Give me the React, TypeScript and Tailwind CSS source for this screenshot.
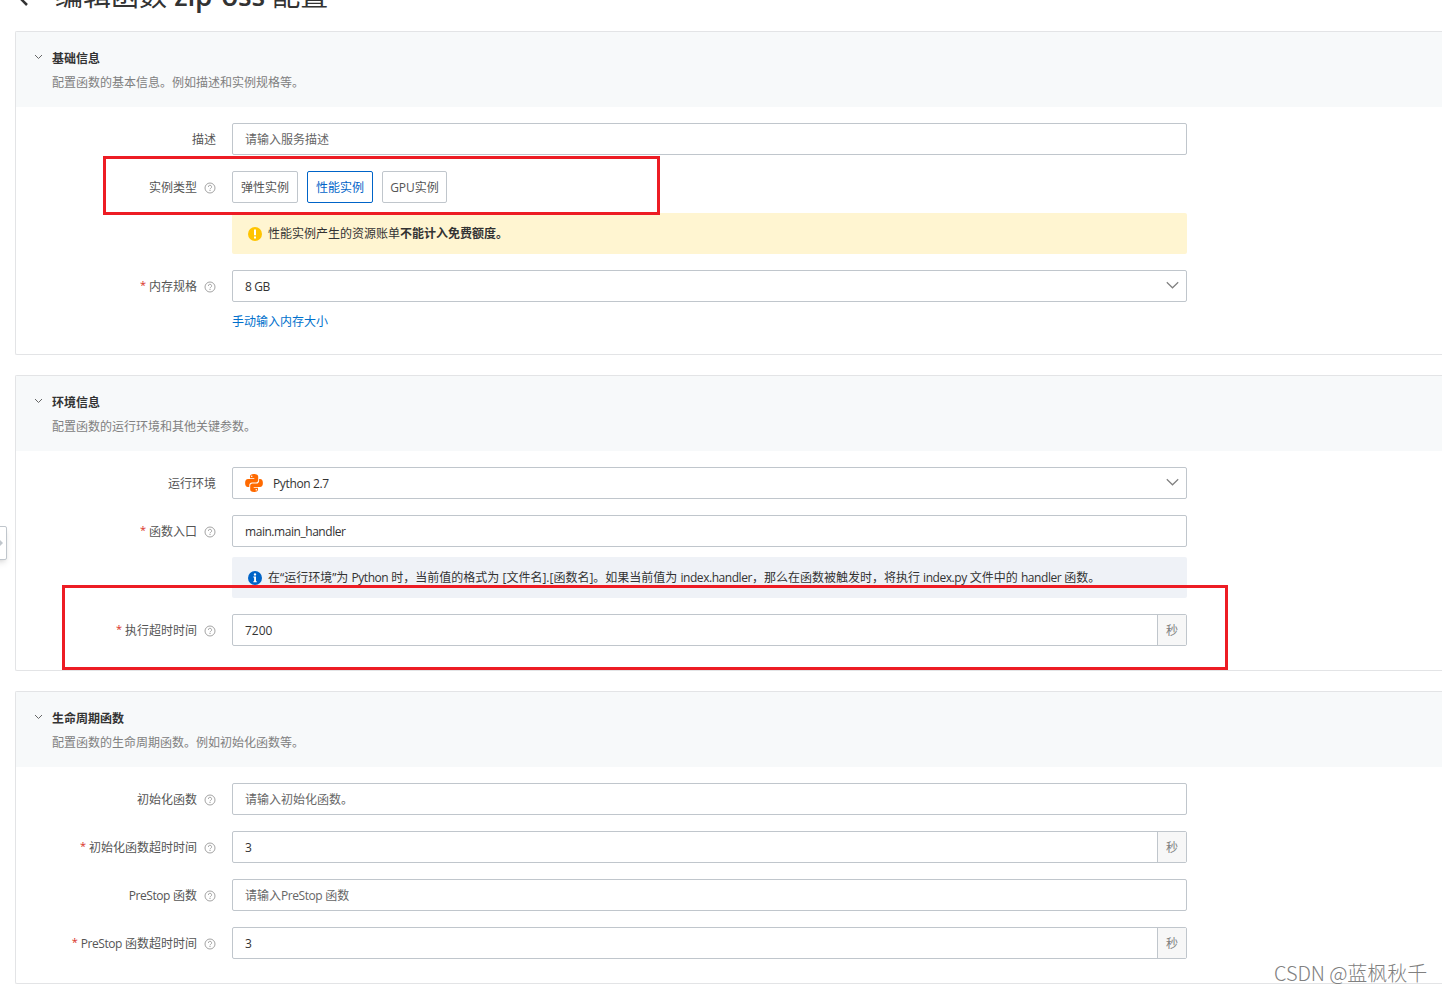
import type { ReactNode } from 'react';
import clsx from 'clsx';

// latin runs sit a little tighter than the chinese text around them
function mixed(text: string) {
  return text.split(/([A-Za-z][A-Za-z0-9_.]*)/).map((part, i) =>
    i % 2 ? (
      <span key={i} className="tracking-[-0.45px]">
        {part}
      </span>
    ) : (
      part
    )
  );
}

function HelpIcon() {
  return (
    <svg viewBox="0 0 12 12" className="ml-[7px] h-3 w-3 shrink-0" fill="none" stroke="#999999">
      <circle cx="6" cy="6" r="5" strokeWidth="0.9" />
      <path d="M4.4 4.9a1.6 1.6 0 1 1 2.3 1.4c-.5.3-.7.5-.7 1" strokeWidth="0.9" />
      <path d="M6 8v1" strokeWidth="1" />
    </svg>
  );
}

function ArrowDown() {
  return (
    <svg viewBox="0 0 14 8" className="mb-0.5 h-2 w-3.5 shrink-0" fill="none" stroke="#808080" strokeWidth="1.2">
      <path d="M1.8 1.300 7.500 6.800 13.200 1.300" />
    </svg>
  );
}

function WarningIcon() {
  return (
    <svg viewBox="0 0 14 14" className="h-3.5 w-3.5 shrink-0">
      <circle cx="7" cy="7" r="7" fill="#ffc400" />
      <path d="M6 2.600h2V8.200H6z" fill="#fff" />
      <path d="M6 9.400h2v2H6z" fill="#fff" />
    </svg>
  );
}

function InfoIcon() {
  return (
    <svg viewBox="0 0 14 14" className="h-3.5 w-3.5 shrink-0">
      <circle cx="7" cy="7" r="7" fill="#0064c8" />
      <circle cx="7" cy="3.400" r="1.200" fill="#fff" />
      <path d="M5.300 5.500h2.700v4.700h.8v1H5.300v-1h.8V6.500h-.8z" fill="#fff" />
    </svg>
  );
}

function PythonIcon() {
  return (
    <svg viewBox="0 0 18 18" className="h-[18px] w-[18px] shrink-0" fill="#ff6a00">
      <path d="M8.900 0C6 0 5 .9 5 2.500V4.300h4.300v.7H3.100C1.200 5 .1 6.400.1 9s1.100 4 2.700 4h1.500v-1.900c0-1.500 1.200-2.600 2.700-2.600h4.100c1.200 0 2.100-1 2.100-2.200V2.500C13.200.9 11.800 0 8.900 0zM6.700 1.400a.8.8 0 1 1 0 1.600.8.800 0 0 1 0-1.600z" />
      <path d="M9.100 18c2.900 0 3.900-.9 3.900-2.500v-1.800H8.700V13h6.200c1.900 0 3-1.400 3-4s-1.100-4-2.700-4h-1.100v1.900c0 1.500-1.200 2.600-2.700 2.600H7.300c-1.200 0-2.100 1-2.100 2.200v3.800c0 1.600 1 2.500 3.900 2.500zm2.200-1.400a.8.800 0 1 1 0-1.600.8.800 0 0 1 0 1.600z" />
    </svg>
  );
}

interface SectionProps {
  title: string;
  desc: string;
  className: string;
  children: ReactNode;
}

function Section({ title, desc, className, children }: SectionProps) {
  return (
    <section className={clsx('shrink-0 rounded-l-[2px] border border-r-0 border-[#e3e4e6] bg-white', className)}>
      <header className="flex h-[75px] bg-[#f7f9fa] pl-[18px] pt-[15px]">
        <svg viewBox="0 0 9 6" className="mt-[7px] h-1.5 w-[9px] shrink-0" fill="none" stroke="#666666">
          <path d="M1 1l3.500 3.500L8 1" />
        </svg>
        <div className="ml-[9px]">
          <h2 className="h-6 font-bold leading-6 text-[#333333]">{title}</h2>
          <p className="h-6 leading-6 text-[#808080]">{desc}</p>
        </div>
      </header>
      <div className="flex flex-col gap-4 pt-4">{children}</div>
    </section>
  );
}

interface FieldProps {
  label: string;
  required?: boolean;
  help?: boolean;
  children: ReactNode;
}

function Field({ label, required, help, children }: FieldProps) {
  return (
    <div className="flex gap-4">
      <div className="flex h-8 w-[200px] shrink-0 items-center justify-end whitespace-nowrap pt-0.5 text-[#555555]">
        {required && <span className="mb-[3px] mr-[3px] text-[11px] text-[#d93026]">*</span>}
        <span>{mixed(label)}</span>
        {help && <HelpIcon />}
      </div>
      <div className="w-[955px] shrink-0">{children}</div>
    </div>
  );
}

function TextBox({ value, placeholder, unit }: { value?: string; placeholder?: string; unit?: string }) {
  return (
    <div className="flex h-8 rounded-[2px] border border-[#c0c6cc]">
      <div className={clsx('flex flex-1 items-center pl-3 pt-0.5', value ? 'text-[#333333]' : 'text-[#666666]')}>
        <span>{mixed(value ?? placeholder ?? '')}</span>
      </div>
      {unit && (
        <div className="flex w-[29px] items-center justify-center border-l border-[#c0c6cc] bg-[#f7f7f7] pt-0.5 text-[#808080]">
          {unit}
        </div>
      )}
    </div>
  );
}

function SelectBox({ children }: { children: ReactNode }) {
  return (
    <div className="flex h-8 items-center justify-between rounded-[2px] border border-[#c0c6cc] pl-3 pr-[7px] text-[#333333]">
      <div className="flex items-center">{children}</div>
      <ArrowDown />
    </div>
  );
}

const instanceTypes = ['弹性实例', '性能实例', 'GPU实例'];

export default function App() {
  return (
    <div className="relative flex h-[992px] w-[1442px] flex-col overflow-hidden bg-white pl-[15px] font-['Open_Sans','Noto_Sans_CJK_SC',sans-serif] text-xs">
      <div className="flex h-[31px] shrink-0 items-end">
        <svg viewBox="0 0 14 22" className="mb-[25px] h-[22px] w-3.5 shrink-0" fill="none" stroke="#333333" strokeWidth="2.500">
          <path d="M12 1 2 11l10 10" />
        </svg>
        <h1 className="mb-4 ml-[26px] whitespace-nowrap text-[28px] leading-10 text-[#333333]">
          编辑函数 <span className="font-semibold tracking-[-0.2px]">zip-oss</span> 配置
        </h1>
      </div>

      <Section title="基础信息" desc="配置函数的基本信息。例如描述和实例规格等。" className="h-[324px]">
        <Field label="描述">
          <TextBox placeholder="请输入服务描述" />
        </Field>
        <Field label="实例类型" help>
          <div className="flex gap-[9px]">
            {instanceTypes.map((t) => (
              <button
                key={t}
                className={clsx(
                  'h-8 rounded-[2px] border pt-0.5',
                  t === 'GPU实例' ? 'w-[65px]' : 'w-[66px]',
                  t === '性能实例' ? 'border-[#0064c8] text-[#0064c8]' : 'border-[#c0c6cc] text-[#555555]'
                )}
              >
                {t}
              </button>
            ))}
          </div>
          <div className="mt-2.5 flex h-[41px] items-center rounded-[2px] bg-[#fff5d1] pl-4 text-[#333333]">
            <WarningIcon />
            <p className="ml-1.5">
              性能实例产生的资源账单<b>不能计入免费额度。</b>
            </p>
          </div>
        </Field>
        <Field label="内存规格" required help>
          <SelectBox>
            <span className="pt-0.5 tracking-[-0.4px]">8 GB</span>
          </SelectBox>
          <a className="mt-2.5 block leading-5 text-[#0070cc]">手动输入内存大小</a>
        </Field>
      </Section>

      <Section title="环境信息" desc="配置函数的运行环境和其他关键参数。" className="mt-5 h-[296px]">
        <Field label="运行环境">
          <SelectBox>
            <PythonIcon />
            <span className="ml-2.5 pt-0.5 tracking-[-0.36px]">Python 2.7</span>
          </SelectBox>
        </Field>
        <Field label="函数入口" required help>
          <TextBox value="main.main_handler" />
          <div className="mt-2.5 flex h-[41px] items-center rounded-[2px] bg-[#eff2f7] pl-4 text-[#333333]">
            <InfoIcon />
            <p className="ml-1.5 whitespace-nowrap">
              {mixed(
                '在“运行环境”为 Python 时，当前值的格式为 [文件名].[函数名]。如果当前值为 index.handler，那么在函数被触发时，将执行 index.py 文件中的 handler 函数。'
              )}
            </p>
          </div>
        </Field>
        <Field label="执行超时时间" required help>
          <TextBox value="7200" unit="秒" />
        </Field>
      </Section>

      <Section title="生命周期函数" desc="配置函数的生命周期函数。例如初始化函数等。" className="mt-5 h-[293px]">
        <Field label="初始化函数" help>
          <TextBox placeholder="请输入初始化函数。" />
        </Field>
        <Field label="初始化函数超时时间" required help>
          <TextBox value="3" unit="秒" />
        </Field>
        <Field label="PreStop 函数" help>
          <TextBox placeholder="请输入PreStop 函数" />
        </Field>
        <Field label="PreStop 函数超时时间" required help>
          <TextBox value="3" unit="秒" />
        </Field>
      </Section>

      {/* sidebar handle */}
      <div className="absolute left-[-8px] top-[526px] flex h-[34px] w-[15px] items-center justify-end rounded-r-[2px] border border-[#c0c6cc] bg-white shadow-md">
        <svg viewBox="0 0 6 6" className="mr-[3px] h-1.5 w-1.5" fill="#c0c6cc">
          <path d="M3 0l3 3-3 3-3-3z" />
        </svg>
      </div>

      {/* highlighted areas */}
      <div className="absolute left-[103px] top-[156px] h-[59px] w-[557px] border-3 border-[#ed1c24]" />
      <div className="absolute left-[62px] top-[585px] h-[85px] w-[1166px] border-3 border-[#ed1c24]" />

      <div className="absolute left-[1274px] top-[959px] whitespace-nowrap font-['Noto_Sans_CJK_SC',sans-serif] text-[20px] font-light leading-7 text-[#808080]">
        <span className="tracking-[-0.1px]">CSDN @</span>蓝枫秋千
      </div>
    </div>
  );
}
